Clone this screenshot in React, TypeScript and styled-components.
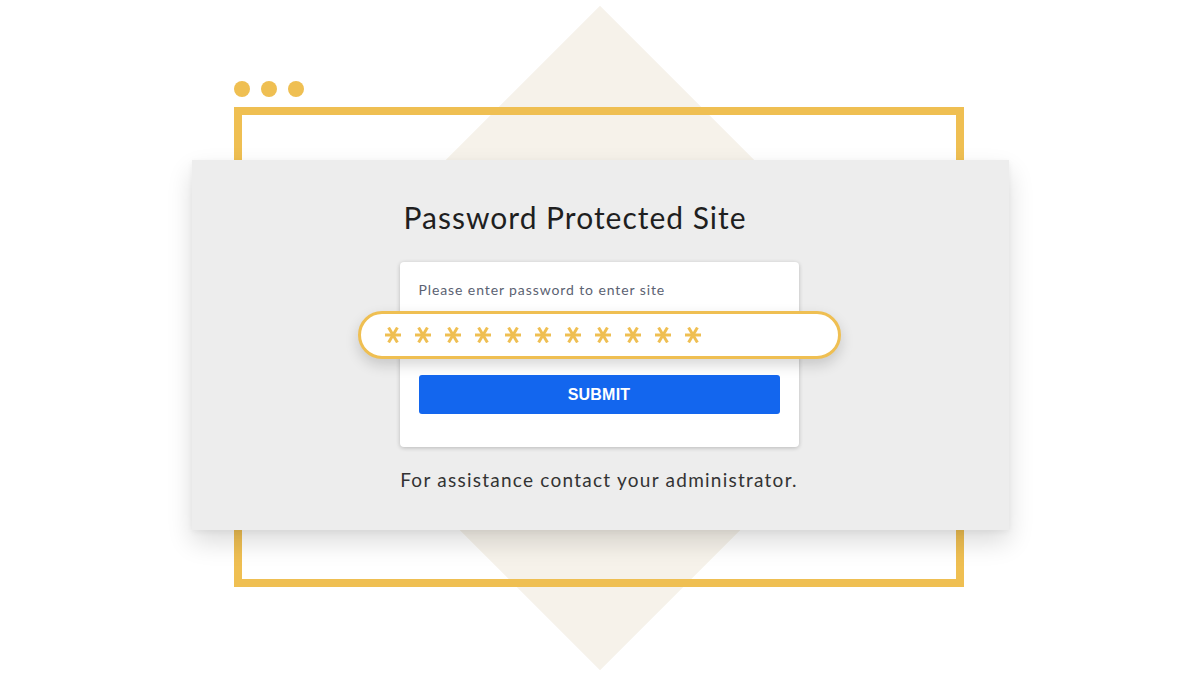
import React from "react";
import styled, { createGlobalStyle } from "styled-components";

const Global = createGlobalStyle`
  html, body { margin: 0; padding: 0; background: #ffffff; }
  body { font-family: "Lato", "Noto Sans", sans-serif; }
`;

const Stage = styled.div`
  position: relative;
  width: 1201px;
  height: 675px;
  overflow: hidden;
  background: #ffffff;
`;

const Diamond = styled.div`
  position: absolute;
  left: 365px;
  top: 103px;
  width: 470px;
  height: 470px;
  background: #f6f2ea;
  transform: rotate(45deg);
`;

const Frame = styled.div`
  position: absolute;
  left: 234px;
  top: 107px;
  width: 730px;
  height: 480px;
  box-sizing: border-box;
  border: 8px solid #efbf52;
`;

const Dots = styled.div`
  position: absolute;
  left: 234px;
  top: 81px;
  display: flex;
  gap: 11px;
`;

const Dot = styled.span`
  width: 16px;
  height: 16px;
  border-radius: 50%;
  background: #efbf52;
`;

const Panel = styled.div`
  position: absolute;
  left: 192px;
  top: 160px;
  width: 817px;
  height: 370px;
  background: #ededed;
  box-shadow: 0 12px 24px rgba(0, 0, 0, 0.14), 0 2px 6px rgba(0, 0, 0, 0.05);
  display: flex;
  flex-direction: column;
  align-items: center;
  padding-top: 39px;
  box-sizing: border-box;
`;

const Column = styled.div`
  width: 399px;
  margin-right: 3px;
  display: flex;
  flex-direction: column;
`;

const Title = styled.h1`
  margin: 0 0 27px 4px;
  font-family: "Lato", sans-serif;
  font-weight: 400;
  font-size: 30px;
  line-height: 36px;
  color: #1f1f1f;
  letter-spacing: 1px;
  white-space: nowrap;
`;

const LoginCard = styled.div`
  background: #ffffff;
  border-radius: 4px;
  box-shadow: 0 1px 4px rgba(0, 0, 0, 0.22);
  padding: 20px 19px 33px;
  display: flex;
  flex-direction: column;
  height: 185px;
  box-sizing: border-box;
`;

const Label = styled.div`
  font-family: "Lato", sans-serif;
  font-size: 14px;
  line-height: 16px;
  color: #5b6272;
  letter-spacing: 0.9px;
  white-space: nowrap;
`;

const Pill = styled.div`
  margin: 13px -61px 16px;
  height: 48px;
  box-sizing: border-box;
  border: 3px solid #efbf52;
  border-radius: 24px;
  background: #ffffff;
  box-shadow: 0 6px 14px rgba(0, 0, 0, 0.16);
  display: flex;
  align-items: center;
  gap: 14px;
  padding-left: 24px;
`;

const Star = styled.svg`
  width: 16px;
  height: 16px;
  display: block;
`;

const Submit = styled.button`
  height: 39px;
  border: none;
  border-radius: 3px;
  background: #1366ee;
  color: #ffffff;
  font-family: "Liberation Sans", Arial, sans-serif;
  font-weight: 700;
  font-size: 16px;
  letter-spacing: 0.2px;
  cursor: pointer;
`;

const Footer = styled.p`
  margin: 22px 0 0;
  text-align: center;
  font-family: "Lato", sans-serif;
  font-size: 19px;
  line-height: 22px;
  color: #333333;
  letter-spacing: 1.25px;
  white-space: nowrap;
`;

const Asterisk = () => (
  <Star viewBox="0 0 16 16">
    <g stroke="#efbf52" strokeWidth="3" strokeLinecap="butt">
      <line x1="0" y1="8" x2="16" y2="8" />
      <line x1="3.6" y1="0.6" x2="12.4" y2="15.4" />
      <line x1="12.4" y1="0.6" x2="3.6" y2="15.4" />
    </g>
  </Star>
);

export default function App() {
  return (
    <Stage>
      <Global />
      <Diamond />
      <Frame />
      <Dots>
        <Dot />
        <Dot />
        <Dot />
      </Dots>
      <Panel>
        <Column>
          <Title>Password Protected Site</Title>
          <LoginCard>
            <Label>Please enter password to enter site</Label>
            <Pill>
              {Array.from({ length: 11 }).map((_, i) => (
                <Asterisk key={i} />
              ))}
            </Pill>
            <Submit>SUBMIT</Submit>
          </LoginCard>
          <Footer>For assistance contact your administrator.</Footer>
        </Column>
      </Panel>
    </Stage>
  );
}
